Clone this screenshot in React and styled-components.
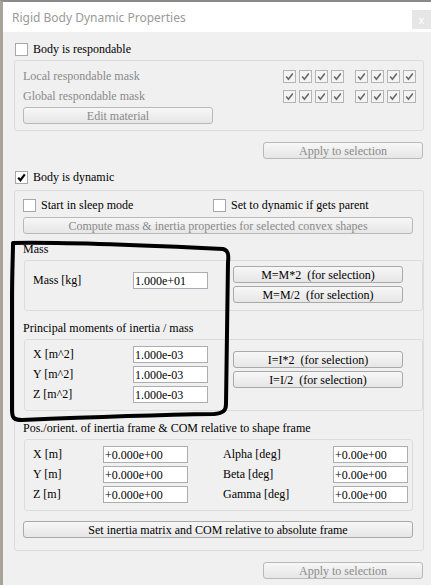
import React from 'react';
import styled, { createGlobalStyle } from 'styled-components';

const GlobalStyle = createGlobalStyle`
  html, body {
    margin: 0;
    padding: 0;
    background: #f0f0f0;
  }
  * { box-sizing: border-box; }
`;

const Page = styled.div`
  position: relative;
  width: 431px;
  height: 585px;
  overflow: hidden;
  background: #f0f0f0;
  border-left: 3px solid #a7a39b;
  border-top: 2px solid #8a8a8a;
  font-family: "Liberation Serif", "DejaVu Serif", serif;
  font-size: 12px;
  color: #000;
`;

const TitleBar = styled.div`
  height: 30px;
  background: #fff;
  display: flex;
  align-items: center;
  justify-content: space-between;
  padding-left: 9px;
  font-family: "Noto Sans", "Open Sans", sans-serif;
  font-size: 12px;
  color: #9a9a9a;
`;

const CloseBtn = styled.div`
  width: 19px;
  height: 19px;
  margin-top: 4px;
  background: #e6e6e6;
  color: #fff;
  font-size: 11px;
  display: flex;
  align-items: center;
  justify-content: center;
`;

const Body = styled.div`
  padding: 7px 7px 0 11px;
  display: flex;
  flex-direction: column;
`;

const CheckRow = styled.label`
  display: flex;
  align-items: center;
  gap: 5px;
  height: ${p => p.$h || 20}px;
  margin-left: ${p => p.$ml ?? 1}px;
  margin-top: ${p => p.$mt || 0}px;
  width: ${p => (p.$w ? `${p.$w}px` : 'auto')};
  color: ${p => (p.$disabled ? '#8a8a8a' : '#000')};
  white-space: nowrap;
`;

const Box = styled.span`
  width: 13px;
  height: 13px;
  flex-shrink: 0;
  display: inline-flex;
  align-items: center;
  justify-content: center;
  background: ${p => (p.$disabled ? '#f4f4f4' : '#fff')};
  border: 1px solid ${p => (p.$disabled ? '#b4b4b4' : '#a8a8a8')};
`;

const Group = styled.div`
  border: 1px solid #dcdcdc;
  border-radius: 3px;
  margin-top: ${p => p.$mt || 0}px;
  padding: ${p => p.$pad};
  display: flex;
  flex-direction: column;
`;

const MaskRow = styled.div`
  display: flex;
  align-items: center;
  height: 17px;
  margin-top: ${p => p.$mt || 0}px;
  color: #8a8a8a;
`;

const MaskLabel = styled.div`
  flex: 1;
`;

const MaskSet = styled.div`
  display: flex;
  gap: 3px;
  margin-left: ${p => p.$ml || 0}px;
`;

const Button = styled.div`
  height: 17px;
  width: ${p => (p.$w ? `${p.$w}px` : 'auto')};
  align-self: ${p => p.$self || 'stretch'};
  margin-top: ${p => p.$mt || 0}px;
  margin-right: ${p => p.$mr || 0}px;
  border: 1px solid ${p => (p.$disabled ? '#b9b9b9' : '#a9a9a9')};
  border-radius: 3px;
  background: linear-gradient(#f7f7f7, #e6e6e6);
  color: ${p => (p.$disabled ? '#8a8a8a' : '#000')};
  display: flex;
  align-items: center;
  justify-content: center;
  white-space: pre;
  line-height: 1;
`;

const CheckPair = styled.div`
  display: flex;
  height: 13px;
`;

const SectionLabel = styled.div`
  line-height: 14px;
  height: 14px;
  margin-top: ${p => p.$mt || 8}px;
  margin-bottom: 4px;
`;

const Panel = styled.div`
  border: 1px solid #dcdcdc;
  border-radius: 3px;
  margin-left: 1px;
  margin-right: ${p => p.$mr || 0}px;
  padding: ${p => p.$pad || '6px 0 7px 8px'};
  display: flex;
  align-items: flex-start;
`;

const FieldCol = styled.div`
  display: flex;
  flex-direction: column;
  gap: 3px;
  margin-top: ${p => p.$mt || 0}px;
`;

const Field = styled.div`
  display: flex;
  align-items: center;
  height: 17px;
`;

const FieldLabel = styled.div`
  width: ${p => p.$w}px;
`;

const Input = styled.div`
  width: ${p => p.$w}px;
  height: 17px;
  background: #fff;
  border: 1px solid #abadb3;
  padding-left: 1px;
  display: flex;
  align-items: center;
  line-height: 1;
`;

const BtnCol = styled.div`
  display: flex;
  flex-direction: column;
  gap: 3px;
  margin-left: 25px;
  margin-top: ${p => p.$mt || 0}px;
`;

const PosGrid = styled.div`
  display: grid;
  grid-template-columns: 70px 85px 35px 110px 75px;
  row-gap: 3px;
  align-items: center;
`;

const Cell = styled.div`
  height: 17px;
  display: flex;
  align-items: center;
`;

const Ink = styled.svg`
  position: absolute;
  left: -3px;
  top: -2px;
  pointer-events: none;
`;

const Tick = ({ color = '#6a6a6a', w = 1.6 }) => (
  <svg width="9" height="9" viewBox="0 0 9 9">
    <path d="M1.2 4.6 L3.4 7.2 L7.8 1.4" fill="none" stroke={color} strokeWidth={w} />
  </svg>
);

const Check = ({ checked, disabled, tickColor, tickW }) => (
  <Box $disabled={disabled}>{checked && <Tick color={tickColor} w={tickW} />}</Box>
);

const Mask = () => (
  <>
    <MaskSet>
      {[0, 1, 2, 3].map(i => <Check key={i} checked disabled />)}
    </MaskSet>
    <MaskSet $ml={11}>
      {[0, 1, 2, 3].map(i => <Check key={i} checked disabled />)}
    </MaskSet>
  </>
);

export default function App() {
  const inertia = [
    ['X [m^2]', '1.000e-03'],
    ['Y [m^2]', '1.000e-03'],
    ['Z [m^2]', '1.000e-03'],
  ];
  const pos = [
    ['X [m]', '+0.000e+00', 'Alpha [deg]', '+0.00e+00'],
    ['Y [m]', '+0.000e+00', 'Beta [deg]', '+0.00e+00'],
    ['Z [m]', '+0.000e+00', 'Gamma [deg]', '+0.00e+00'],
  ];

  return (
    <Page>
      <GlobalStyle />
      <TitleBar>
        Rigid Body Dynamic Properties
        <CloseBtn>x</CloseBtn>
      </TitleBar>
      <Body>
        <CheckRow>
          <Check />
          Body is respondable
        </CheckRow>
        <Group $mt={1} $pad="7px 7px 6px 8px">
          <MaskRow>
            <MaskLabel>Local respondable mask</MaskLabel>
            <Mask />
          </MaskRow>
          <MaskRow $mt={3}>
            <MaskLabel>Global respondable mask</MaskLabel>
            <Mask />
          </MaskRow>
          <Button $disabled $w={190} $self="flex-start" $mt={2}>Edit material</Button>
        </Group>
        <Button $disabled $w={160} $self="flex-end" $mt={11} $mr={1}>Apply to selection</Button>
        <CheckRow $mt={8}>
          <Check checked tickColor="#000" tickW={2.2} />
          Body is dynamic
        </CheckRow>
        <Group $mt={3} $pad="8px 0 12px 8px">
          <CheckPair>
            <CheckRow $h={13} $ml={0} $w={190}>
              <Check />
              Start in sleep mode
            </CheckRow>
            <CheckRow $h={13} $ml={0}>
              <Check />
              Set to dynamic if gets parent
            </CheckRow>
          </CheckPair>
          <Button $disabled $mt={5} $mr={10}>Compute mass &amp; inertia properties for selected convex shapes</Button>

          <SectionLabel $mt={8}>Mass</SectionLabel>
          <Panel $pad="5px 0 7px 8px">
            <FieldCol $mt={6}>
              <Field>
                <FieldLabel $w={100}>Mass [kg]</FieldLabel>
                <Input $w={75}>1.000e+01</Input>
              </Field>
            </FieldCol>
            <BtnCol>
              <Button $w={170}>{'M=M*2  (for selection)'}</Button>
              <Button $w={170}>{'M=M/2  (for selection)'}</Button>
            </BtnCol>
          </Panel>

          <SectionLabel $mt={10}>Principal moments of inertia / mass</SectionLabel>
          <Panel>
            <FieldCol>
              {inertia.map(([l, v]) => (
                <Field key={l}>
                  <FieldLabel $w={100}>{l}</FieldLabel>
                  <Input $w={75}>{v}</Input>
                </Field>
              ))}
            </FieldCol>
            <BtnCol $mt={5}>
              <Button $w={170}>{'I=I*2  (for selection)'}</Button>
              <Button $w={170}>{'I=I/2  (for selection)'}</Button>
            </BtnCol>
          </Panel>

          <SectionLabel $mt={10}>Pos./orient. of inertia frame &amp; COM relative to shape frame</SectionLabel>
          <Panel $mr={10}>
            <PosGrid>
              {pos.map(([a, b, c, d]) => (
                <React.Fragment key={a}>
                  <Cell>{a}</Cell>
                  <Input $w={85}>{b}</Input>
                  <Cell />
                  <Cell>{c}</Cell>
                  <Input $w={75}>{d}</Input>
                </React.Fragment>
              ))}
            </PosGrid>
          </Panel>
          <Button $mt={10} $mr={10}>Set inertia matrix and COM relative to absolute frame</Button>
        </Group>
        <Button $disabled $w={160} $self="flex-end" $mt={11} $mr={1}>Apply to selection</Button>
      </Body>

      <Ink width="431" height="585" viewBox="0 0 431 585">
        <path
          d="M13 243 C 70 242, 160 246, 223 249 C 228 250, 229 254, 228 262 L 226 404 C 226 411, 223 413, 214 414 C 150 415, 70 418, 22 420 C 14 420, 12 418, 12 410 L 12 300 C 12 270, 13 255, 13 243 Z"
          fill="none"
          stroke="#000"
          strokeWidth="4"
          strokeLinejoin="round"
        />
      </Ink>
    </Page>
  );
}
